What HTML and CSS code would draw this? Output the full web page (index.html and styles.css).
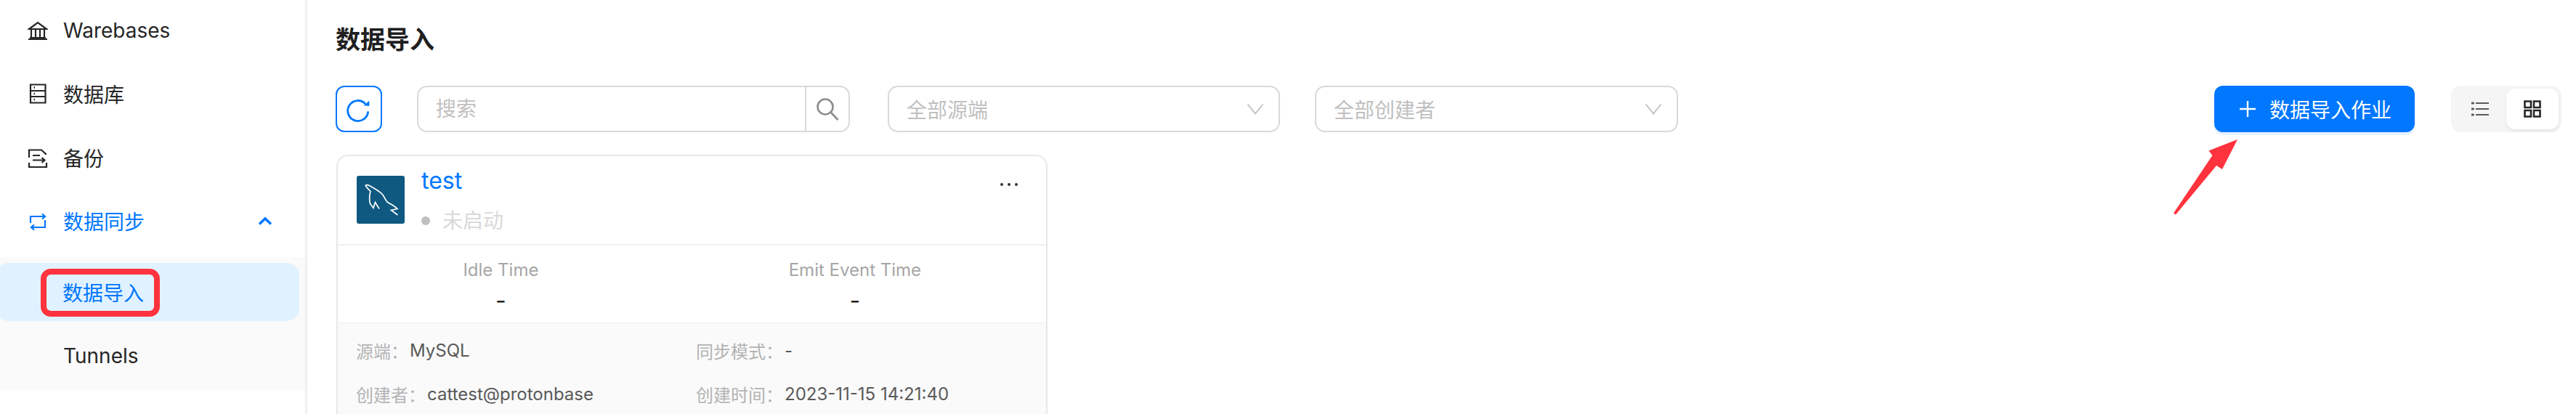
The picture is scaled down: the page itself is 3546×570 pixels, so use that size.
FILE: index.html
```html
<!DOCTYPE html>
<html lang="zh">
<head>
<meta charset="utf-8">
<title>数据导入</title>
<link rel="stylesheet" href="styles.css">
</head>
<body>
<div class="app">
  <aside class="sidebar">
    <nav class="nav">
      <div class="nav-item">
        <svg class="nav-icon" viewBox="0 0 28 28"><path d="M2 12 14 3l12 9z M5 13v11 M11 13v11 M17 13v11 M23 13v11 M3 24h22 M1 26h26"/></svg>
        <span>Warebases</span>
      </div>
      <div class="nav-item">
        <svg class="nav-icon" viewBox="0 0 28 28"><path d="M4 1.500h20.500v25H4z M4 10h20.500 M4 18h20.500"/><path class="dots" d="M8.500 5.500h1.500 M8.500 14h1.500 M8.500 22h1.500"/></svg>
        <span>数据库</span>
      </div>
      <div class="nav-item">
        <svg class="nav-icon" viewBox="0 0 28 28"><path d="M2 14V3.500h17l6 5.500v1 M2 21v6h24v-6 M7 11h10 M7 17.500h16 M19.500 14l4 3.500-4 3.500"/></svg>
        <span>备份</span>
      </div>
      <div class="nav-item active">
        <svg class="nav-icon" viewBox="0 0 28 28"><path d="M4 17V8h20 M20 4.500 24 8l-4 3.500 M24 13v10H5 M9 19.500 5 23l4 3.500"/></svg>
        <span>数据同步</span>
        <svg class="nav-caret" viewBox="0 0 20 12"><path d="M2 10.500 10 3l8 7.500"/></svg>
      </div>
      <div class="submenu">
        <div class="sub-item selected">
          <span>数据导入</span>
          <div class="mark-box"></div>
        </div>
        <div class="sub-item">
          <span>Tunnels</span>
        </div>
      </div>
    </nav>
  </aside>
  <main class="main">
    <h1 class="title">数据导入</h1>
    <div class="toolbar">
      <button class="refresh">
        <svg viewBox="0 0 36 36"><path d="M27 11A14 14 0 1 0 30.700 21.300"/><path class="solid" d="M32.300 6.700V14l-7.600-.7z"/></svg>
      </button>
      <div class="search">
        <div class="search-field">搜索</div>
        <div class="search-btn">
          <svg viewBox="0 0 32 32"><circle cx="13" cy="13" r="10.500"/><path d="m21 21 9.500 10"/></svg>
        </div>
      </div>
      <div class="select source">
        <span>全部源端</span>
        <svg viewBox="0 0 24 16"><path d="M1.500 1.500 12 14.500 22.500 1.500"/></svg>
      </div>
      <div class="select creator">
        <span>全部创建者</span>
        <svg viewBox="0 0 24 16"><path d="M1.500 1.500 12 14.500 22.500 1.500"/></svg>
      </div>
      <button class="primary">
        <svg viewBox="0 0 24 24"><path d="M12 1v22 M1 12h22"/></svg>
        <span>数据导入作业</span>
      </button>
      <div class="view-toggle">
        <div class="view-opt">
          <svg viewBox="0 0 24 20"><path d="M6 2h18 M6 10h18 M6 18h18"/><path class="round" d="M.5 2h2 M.5 10h2 M.5 18h2"/></svg>
        </div>
        <div class="view-opt on">
          <svg viewBox="0 0 24 24"><path d="M1.500 1.500h8.500v8.500H1.500z M14 1.500h8.500v8.500H14z M1.500 14h8.500v8.500H1.500z M14 14h8.500v8.500H14z"/></svg>
        </div>
      </div>
    </div>
    <article class="card">
      <header class="card-head">
        <div class="logo">
          <svg viewBox="0 0 66 66"><path d="M12 13c2-1 4 0 5.500.5L26 18.500c5 3 8 5 10.500 8.500 2 3.500 3.500 7 6 9.500 3 2 6 3 8.500 5 2 1.500 4 2.500 5 4l-8.500 2 9 6.500M12 13c1 3 4 5 7 8.500-2 6-1.500 12-.500 17l4.500 6 2.500-8 5.500 9"/></svg>
        </div>
        <div class="head-text">
          <div class="name">test</div>
          <div class="status"><i class="dot"></i><span>未启动</span></div>
        </div>
        <div class="more"><i></i><i></i><i></i></div>
      </header>
      <section class="metrics">
        <div class="metric"><div class="metric-label">Idle Time</div><div class="metric-value">-</div></div>
        <div class="metric"><div class="metric-label">Emit Event Time</div><div class="metric-value">-</div></div>
      </section>
      <section class="details">
        <div class="detail"><span class="k">源端：</span><span class="v">MySQL</span></div>
        <div class="detail"><span class="k">同步模式：</span><span class="v">-</span></div>
        <div class="detail"><span class="k">创建者：</span><span class="v">cattest@protonbase</span></div>
        <div class="detail"><span class="k">创建时间：</span><span class="v">2023-11-15 14:21:40</span></div>
      </section>
    </article>
  </main>
  <svg class="mark-arrow" viewBox="0 0 100 110"><path d="M90 2 50.500 17.500l5 6.500L2 103.500l3 2 56-67.500 8 5z"/></svg>
</div>
</body>
</html>
```

FILE: styles.css
```css
* { box-sizing: border-box; }
html, body { margin: 0; padding: 0; background: #fff; }
body {
  font-family: Inter, "Noto Sans CJK SC", sans-serif;
  color: #1f1f1f;
  height: 570px;
  overflow: hidden;
}
svg { display: block; fill: none; stroke: currentColor; }
.app { position: relative; display: flex; width: 3546px; height: 570px; overflow: hidden; }

/* sidebar */
.sidebar { flex: 0 0 423px; border-right: 3px solid #f0f0f0; overflow: hidden; }
.nav { margin-top: -2px; }
.nav-item {
  display: flex; align-items: center; gap: 21px;
  height: 87.5px; padding-left: 38px;
  font-size: 28px; color: #262626;
}
.nav-icon { flex: none; width: 28px; height: 28px; stroke-width: 2.200; }
.nav-icon .dots { stroke-width: 2.500; }
.nav-item.active { color: #0077ff; }
.nav-caret { width: 20px; height: 12px; margin-left: auto; margin-right: 45px; stroke-width: 3.500; }
.submenu { margin-top: 6px; padding: 8px 0 7px; background: #fafafa; }
.sub-item {
  position: relative; display: flex; align-items: center;
  height: 80px; padding-left: 87px;
  font-size: 28px; color: #262626;
}
.sub-item + .sub-item { margin-top: 8px; }
.sub-item.selected {
  margin: 0 8px 0 -6px; padding-left: 92px;
  background: #e0f2ff; border-radius: 18px; color: #0077ff;
}
.mark-box {
  position: absolute; left: 62px; top: 8px;
  width: 164px; height: 66px;
  border: 8px solid #ff333d; border-radius: 14px;
}

/* main */
.main { flex: 1; min-width: 0; padding: 32px 20px 0 39px; }
.title { margin: 0; font-size: 34px; line-height: 46px; font-weight: 700; color: #1f1f1f; }
.toolbar { display: flex; align-items: center; height: 64px; margin-top: 40px; }
button { font-family: inherit; margin: 0; padding: 0; cursor: pointer; }
.refresh {
  flex: none; display: flex; align-items: center; justify-content: center;
  width: 64px; height: 64px; background: #fff; color: #0077ff;
  border: 2px solid #0077ff; border-radius: 12px;
}
.refresh svg { width: 36px; height: 36px; stroke-width: 2.800; }
.refresh .solid { fill: #0077ff; stroke: none; }
.search {
  flex: none; display: flex; width: 596px; height: 64px; margin-left: 48px;
  border: 2px solid #d9d9d9; border-radius: 14px; background: #fff;
}
.search-field { flex: 1; padding-left: 24px; font-size: 28px; line-height: 60px; color: #bfbfbf; }
.search-btn {
  flex: none; display: flex; align-items: center; justify-content: center;
  width: 60px; border-left: 2px solid #d9d9d9; color: #8c8c8c;
}
.search-btn svg { width: 32px; height: 32px; stroke-width: 2.600; }
.select {
  flex: none; display: flex; align-items: center; justify-content: space-between;
  height: 64px; padding: 0 20px 0 24px;
  border: 2px solid #d9d9d9; border-radius: 14px; background: #fff;
  font-size: 28px; color: #bfbfbf;
}
.select svg { width: 24px; height: 16px; stroke-width: 1.800; }
.select.source { width: 540px; margin-left: 52px; }
.select.creator { width: 500px; margin-left: 48px; }
.primary {
  flex: none; display: flex; align-items: center; gap: 18px;
  width: 276px; height: 64px; margin-left: auto; padding-left: 34px;
  background: #0077ff; color: #fff; border: 0; border-radius: 12px;
  font-size: 28px; box-shadow: 0 4px 0 #e6f2ff;
}
.primary svg { width: 24px; height: 24px; stroke-width: 2.400; }
.view-toggle {
  flex: none; display: flex; justify-content: flex-end; gap: 0;
  width: 152px; height: 64px; margin-left: 50px; padding: 4px;
  background: #f5f5f5; border-radius: 14px;
}
.view-opt { display: flex; align-items: center; justify-content: center; width: 72px; color: #595959; }
.view-opt svg { width: 24px; height: 20px; stroke-width: 2.200; }
.view-opt.on {
  background: #fff; border-radius: 12px; color: #262626;
  box-shadow: 0 2px 4px rgba(0,0,0,.08);
}
.view-opt.on svg { height: 24px; stroke-width: 2.600; }
.view-opt .round { stroke-linecap: round; stroke-width: 3; }

/* card */
.card {
  width: 979px; margin: 31px 0 0 1px;
  border: 2px solid #e8e8e8; border-radius: 16px 16px 0 0;
}
.card-head {
  position: relative; display: flex; height: 123px; padding: 27px 26px 0;
  border-bottom: 2px solid #f0f0f0;
}
.logo { flex: none; width: 66px; height: 66px; background: #0f5880; border-radius: 3px; color: #fff; }
.logo svg { width: 66px; height: 66px; stroke-width: 1.700; }
.head-text { margin-left: 23px; }
.name { margin-top: -15px; font-size: 32px; line-height: 44px; color: #0077ff; }
.status { display: flex; align-items: center; gap: 17px; margin-top: 13px; font-size: 28px; line-height: 40px; color: #d9d9d9; }
.dot { width: 12px; height: 12px; border-radius: 50%; background: #bfbfbf; }
.more { position: absolute; top: 37px; right: 39px; display: flex; gap: 6px; }
.more i { width: 4px; height: 4px; border-radius: 50%; background: #333; }
.metrics { display: flex; height: 108px; border-bottom: 2px solid #f5f5f5; }
.metric { width: 452px; text-align: center; padding-top: 17px; }
.metric + .metric { width: 530px; }
.metric-label { font-size: 24px; line-height: 34px; color: #a6a6a6; }
.metric-value { margin-top: 5px; font-size: 32px; line-height: 40px; color: #1f1f1f; }
.details {
  display: grid; grid-template-columns: 468px 1fr; grid-auto-rows: 60px;
  padding: 6px 0 0 25px; background: #fafafa;
  font-size: 24px;
}
.detail { display: flex; align-items: center; white-space: nowrap; }
.k { color: #b3b3b3; }
.v { margin-left: 2px; color: #595959; }

/* annotation */
.mark-arrow {
  position: absolute; left: 2990px; top: 190px;
  width: 100px; height: 110px; stroke: none; fill: #ff333d;
}
```
